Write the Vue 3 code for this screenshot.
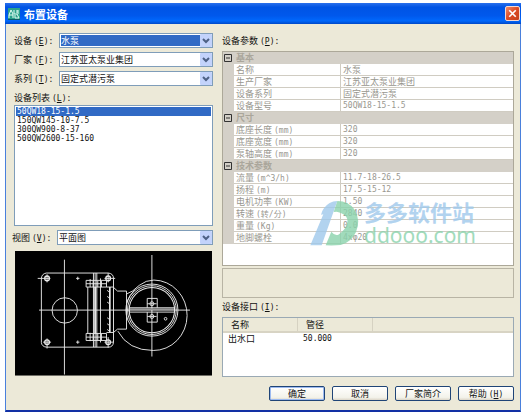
<script setup>
import { ref } from 'vue'

const device = ref('水泵')
const maker = ref('江苏亚太泵业集团')
const series = ref('固定式潜污泵')
const view = ref('平面图')
const model = ref('50QW18-15-1.5')
const models = ['50QW18-15-1.5', '150QW145-10-7.5', '300QW900-8-37', '500QW2600-15-160']

const combos = [
  { id: 'device', name: '设备', key: 'E', value: device, focused: true },
  { id: 'maker', name: '厂家', key: 'F', value: maker },
  { id: 'series', name: '系列', key: 'T', value: series },
]

const groups = ref([
  {
    name: '基本',
    open: true,
    rows: [
      ['名称', '', '水泵'],
      ['生产厂家', '', '江苏亚太泵业集团'],
      ['设备系列', '', '固定式潜污泵'],
      ['设备型号', '', '50QW18-15-1.5'],
    ],
  },
  {
    name: '尺寸',
    open: true,
    rows: [
      ['底座长度', '(mm)', '320'],
      ['底座宽度', '(mm)', '320'],
      ['泵轴高度', '(mm)', '320'],
    ],
  },
  {
    name: '技术参数',
    open: true,
    rows: [
      ['流量', '(m^3/h)', '11.7-18-26.5'],
      ['扬程', '(m)', '17.5-15-12'],
      ['电机功率', '(KW)', '1.50'],
      ['转速', '(转/分)', '2840'],
      ['重量', '(Kg)', '0.0'],
      ['地脚螺栓', '', '4xφ20'],
    ],
  },
])

const isCode = (text) => /\d/.test(text)
</script>

<template>
  <main class="dialog">
    <header class="titlebar">
      <svg class="app-icon" viewBox="0 0 12 12" aria-hidden="true">
        <rect width="12" height="12" fill="#2aa18c" />
        <path d="M1 10V7L3 2L5 6V10M1 7H5M6 2V6H9L11 10H7V7M9 2V5M10 2V6" fill="none" stroke="#e4fff4" />
        <path d="M0 11.5H12" stroke="#0c5b68" />
      </svg>
      <h1>布置设备</h1>
      <button class="close" type="button" aria-label="关闭">
        <svg viewBox="0 0 14 14" aria-hidden="true">
          <path d="M3.5 3.5L10.5 10.5M10.5 3.5L3.5 10.5" stroke="#fff" stroke-width="1.8" />
        </svg>
      </button>
    </header>

    <div class="body">
      <section class="left">
        <div v-for="c in combos" :key="c.id" class="field">
          <label :for="c.id">{{ c.name }} <span class="m">(<u>{{ c.key }}</u>):</span></label>
          <div class="combo">
            <select :id="c.id" v-model="c.value.value" :class="{ focused: c.focused }">
              <option>{{ c.value.value }}</option>
            </select>
            <svg class="arrow" viewBox="0 0 12 13" aria-hidden="true">
              <rect width="12" height="13" rx="1" fill="#c3d3fb" />
              <path d="M3 5L6 8L9 5" fill="none" stroke="#4d6185" stroke-width="2" />
            </svg>
          </div>
        </div>

        <label class="list-label" for="models">设备列表 <span class="m">(<u>L</u>):</span></label>
        <select id="models" v-model="model" class="listbox" size="4">
          <option v-for="m in models" :key="m">{{ m }}</option>
        </select>

        <div class="field view">
          <label for="view">视图 <span class="m">(<u>V</u>):</span></label>
          <div class="combo">
            <select id="view" v-model="view">
              <option>平面图</option>
            </select>
            <svg class="arrow" viewBox="0 0 12 13" aria-hidden="true">
              <rect width="12" height="13" rx="1" fill="#c3d3fb" />
              <path d="M3 5L6 8L9 5" fill="none" stroke="#4d6185" stroke-width="2" />
            </svg>
          </div>
        </div>

        <svg class="drawing" viewBox="28 22 590 373" role="img" aria-label="平面图">
          <rect x="28" y="22" width="590" height="373" fill="#000" />
          <g fill="none" stroke="#e8e8e8" stroke-width="2.8">
            <path d="M176 48V392M438 34V338M100 199H552" />
            <path d="M122 88H308Q323 90 323 104V140M323 258V296Q321 310 308 310H122Q108 308 107 296V104Q108 90 122 88" />
            <circle cx="177" cy="200" r="38" />
            <g stroke-width="4">
              <circle cx="124" cy="104" r="7" />
              <circle cx="307" cy="104" r="7" />
              <circle cx="124" cy="295" r="7" />
              <circle cx="307" cy="295" r="7" />
            </g>
            <path d="M96 104H134M124 92V116M296 104H328M307 88V116M112 295H136M124 284V314M296 295H324M307 280V312M211 104H221M216 99V109M211 295H221M216 290V300" />
            <path d="M241 110H302V130H241ZM241 269H302V290H241ZM241 120H302M241 280H302M253 106V130M253 267V292M262 112V130M276 112V130M287 112V130M262 270V290M276 270V290M287 270V290" />
            <path d="M246 130V269M263 88V310M268 88V310M273 88V310M284 104V296" />
            <path d="M268 130V269M312 130V266" stroke-width="5" />
            <path d="M302 130H322L335 142H362V256H335L323 266H302M323 136V262M304 140L311 145M304 158L311 163M304 175L311 180M304 222L311 227M304 240L311 245M304 257L311 262" />
            <path d="M362 151Q380 145 400 125Q420 109 444 109A100 105 0 0 1 442 320Q367 320 336 262" />
            <path d="M362 178Q370 154 386 139" />
            <circle cx="438" cy="199" r="78" />
            <circle cx="438" cy="199" r="73" />
            <circle cx="438" cy="199" r="68" stroke-width="3" />
            <path d="M370 192H506V205H370ZM424 164H454V192M424 192V164M424 205V235H454V205" />
            <path d="M372 196H504" stroke="#999" stroke-width="5" />
            <circle cx="438" cy="180" r="6" />
            <circle cx="438" cy="218" r="6" />
            <path d="M424 180H452M424 218H452" />
            <circle cx="479" cy="225" r="4" />
          </g>
        </svg>
      </section>

      <section class="right">
        <h2>设备参数 <span class="m">(<u>P</u>):</span></h2>
        <div class="properties">
          <table>
            <colgroup>
              <col class="c-toggle" />
              <col class="c-name" />
              <col />
            </colgroup>
            <tbody v-for="g in groups" :key="g.name">
              <tr class="group">
                <td class="gutter">
                  <button type="button" class="toggle" :aria-label="g.name" @click="g.open = !g.open">
                    <svg viewBox="0 0 8 8" aria-hidden="true">
                      <path d="M0.5 0.5H7.5V7.5H0.5ZM2 4H6" fill="none" stroke="#333" />
                    </svg>
                  </button>
                </td>
                <th colspan="2" scope="rowgroup">{{ g.name }}</th>
              </tr>
              <template v-if="g.open">
                <tr v-for="r in g.rows" :key="r[0]">
                  <td class="gutter"></td>
                  <th scope="row">{{ r[0] }} <span class="m">{{ r[1] }}</span></th>
                  <td class="value" :class="{ code: isCode(r[2]) }">{{ r[2] }}</td>
                </tr>
              </template>
            </tbody>
          </table>
          <div class="watermark" aria-hidden="true">
            <svg viewBox="24 24 156 138">
              <path d="M28 160L67 67L60 68Q66 45 86 33Q96 27 109 27L62 160Z" fill="#9fc9ec" />
              <path d="M109 27Q143 27 161 53Q180 85 165 120Q151 151 119 159Q101 161 74 160L91 119Q102 133 112 128Q135 114 139 91Q143 67 107 59L98 60Z" fill="#8ad3ac" />
            </svg>
            <div class="mark-text">
              <strong>多多软件站</strong>
              <span>ddooo.com</span>
            </div>
          </div>
        </div>
        <div class="description"></div>

        <h2>设备接口 <span class="m">(<u>I</u>):</span></h2>
        <div class="ports">
          <table>
            <thead>
              <tr>
                <th scope="col">名称</th>
                <th scope="col">管径</th>
                <th class="rest"></th>
              </tr>
            </thead>
            <tbody>
              <tr>
                <td>出水口</td>
                <td class="code">50.000</td>
                <td></td>
              </tr>
            </tbody>
          </table>
        </div>
      </section>
    </div>

    <footer>
      <button type="button" class="default">确定</button>
      <button type="button">取消</button>
      <button type="button">厂家简介</button>
      <button type="button">帮助 <span class="m">(<u>H</u>)</span></button>
    </footer>
  </main>
</template>

<style>
body {
  background: #fff;
}
</style>

<style scoped>
* {
  box-sizing: border-box;
}

.dialog {
  margin: 3px 3px 4px 5px;
  border: 1px solid #4a80dc;
  border-top: 0;
  border-bottom: 2px solid #1230a4;
  background: #ece9d8;
  color: #111;
  font: 9px/12px "Noto Sans CJK SC", sans-serif;
}

.m,
.code,
.listbox {
  font-family: "DejaVu Sans Mono", "Noto Sans CJK SC", monospace;
  font-size: 8px;
}

.m {
  line-height: 8px;
}

.titlebar {
  display: flex;
  align-items: center;
  gap: 4px;
  height: 21px;
  margin: 0 -1px;
  padding: 0 1px 0 3px;
  background: linear-gradient(#2a70ec, #0054e4 20%, #0058ec 60%, #0068fc 85%, #0048c8);
  color: #fff;
}

.app-icon {
  width: 12px;
  height: 12px;
}

h1 {
  flex: 1;
  margin: 0;
  font-size: 11px;
  font-weight: 700;
  line-height: 16px;
}

button {
  padding: 0;
  color: inherit;
  font: inherit;
}

.close {
  width: 15px;
  height: 15px;
  border: 1px solid #f6d8d0;
  border-radius: 2px;
  background: linear-gradient(135deg, #f08a68, #dc4a24 50%, #c4401c);
}

svg {
  display: block;
}

.body {
  display: grid;
  grid-template-columns: 199fr 292fr;
  gap: 9px;
  padding: 9px 6px 0 8px;
}

.left,
.right {
  display: flex;
  flex-direction: column;
  min-width: 0;
}

.field {
  display: flex;
  align-items: center;
  height: 15px;
  margin-bottom: 4px;
}

.field label {
  width: 45px;
  white-space: nowrap;
}

.combo {
  position: relative;
  flex: 1;
  height: 15px;
}

.combo select {
  display: block;
  width: 100%;
  height: 15px;
  padding: 1px 15px 1px 1px;
  border: 1px solid #7f9db9;
  border-radius: 0;
  appearance: none;
  background: #fff;
  color: #111;
  font: inherit;
  line-height: 11px;
}

.combo select.focused {
  background: #316ac5;
  box-shadow: inset 0 0 0 1px #fff;
  color: #fff;
}

.arrow {
  position: absolute;
  top: 1px;
  right: 1px;
  width: 12px;
  height: 13px;
  pointer-events: none;
}

.list-label {
  margin: 2px 0 1px;
}

.listbox {
  width: 100%;
  height: 121px;
  padding: 1px;
  overflow: hidden;
  border: 1px solid #7f9db9;
  border-radius: 0;
  outline: 0;
  background: #fff;
  color: #111;
}

.listbox option {
  min-height: 0;
  padding: 0 1px;
  line-height: 9px;
}

.listbox option:checked {
  background: #316ac5 linear-gradient(#316ac5, #316ac5);
  color: #fff;
  -webkit-text-fill-color: #fff;
}

.view {
  margin: 4px 0 6px -2px;
}

.drawing {
  width: 197px;
  max-width: 100%;
  margin-left: 1px;
}

h2 {
  margin: 2px 0 4px;
  font-size: 9px;
  font-weight: 400;
  line-height: 12px;
}

table {
  width: 100%;
  border-collapse: separate;
  border-spacing: 0;
  table-layout: fixed;
}

th,
td {
  height: 12px;
  padding: 0 2px;
  font-weight: 400;
  line-height: 10px;
  text-align: left;
  white-space: nowrap;
}

.properties {
  position: relative;
  height: 215px;
  border: 1px solid #aca899;
  background: #fff;
  color: #99978f;
}

.c-toggle {
  width: 11px;
}

.c-name {
  width: 106px;
}

.properties th,
.properties td {
  border-bottom: 1px solid #d0ccc2;
}

.properties .gutter {
  padding: 0 0 0 1px;
  border-color: #d4d0c8;
  background: #d4d0c8;
}

.properties .group th {
  border-color: #d4d0c8;
  background: #d4d0c8;
  font-weight: 700;
  color: #aaa69b;
}

.properties .value {
  border-left: 1px solid #d0ccc2;
}

.toggle {
  display: block;
  width: 8px;
  height: 8px;
  border: 0;
  background: none;
}

.watermark {
  position: absolute;
  right: 37px;
  bottom: 18px;
  display: flex;
  align-items: center;
  gap: 3px;
  opacity: 0.8;
  pointer-events: none;
}

.watermark svg {
  width: 52px;
  height: 46px;
}

.mark-text {
  display: flex;
  flex-direction: column;
}

.mark-text strong {
  color: #9fc9ec;
  font-size: 22px;
  line-height: 24px;
}

.mark-text span {
  color: #8ad3ac;
  font: 21px/24px "Noto Sans", sans-serif;
}

.description {
  height: 30px;
  margin: 2px 0 1px;
  border: 1px solid #b8b4a4;
}

.ports {
  height: 60px;
  border: 1px solid #9aa9b4;
  background: #fff;
}

.ports th {
  width: 75px;
  height: 15px;
  padding: 0 8px;
  border-right: 1px solid #d6d2c2;
  border-bottom: 2px solid #d8d4c4;
  background: #ece9d8;
}

.ports .rest {
  width: auto;
  border-right: 0;
}

.ports td {
  padding: 0 5px;
}

footer {
  display: flex;
  justify-content: flex-end;
  gap: 7px;
  padding: 9px 6px 9px;
}

footer button {
  width: 56px;
  height: 15px;
  border: 1px solid #1f4477;
  border-radius: 2px;
  background: linear-gradient(#fff, #f3f2ea 80%, #dcd6c8);
  line-height: 12px;
}

footer .default {
  box-shadow: inset 0 0 0 1px #9dbaf0;
}
</style>
